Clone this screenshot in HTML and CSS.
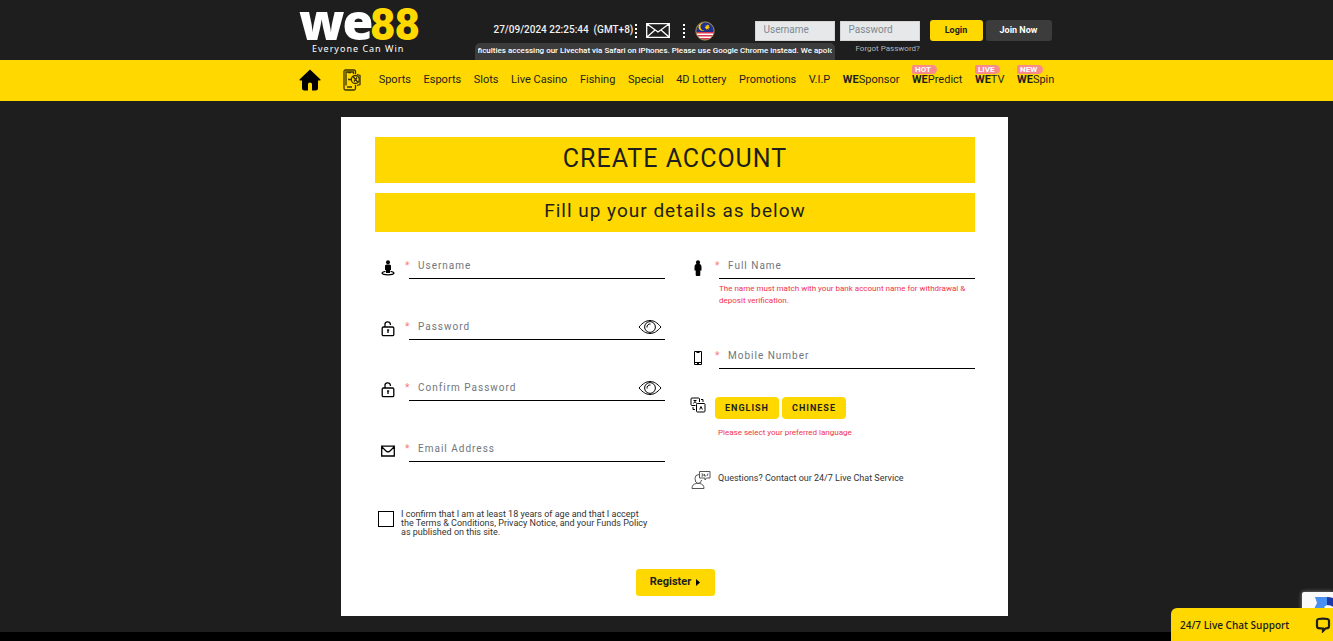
FILE: index.html
```html
<!DOCTYPE html>
<html lang="en">
<head>
<meta charset="utf-8">
<meta name="viewport" content="width=device-width, initial-scale=1">
<title>WE88 - Create Account</title>
<link rel="stylesheet" href="styles.css">
</head>
<body>
<svg class="defs" aria-hidden="true">
  <symbol id="lock" viewBox="0 0 14 16"><rect x="1.2" y="6" width="11.6" height="8.6" rx="1.2"/><path d="M4 6V3.8a2.7 2.7 0 0 1 5.4-.6V4M7 9v3" /><path d="M6 9h2.200"/></symbol>
  <symbol id="eye" viewBox="0 0 24 16"><path d="M1 8C5 3.500 8 1.500 12 1.500S19 3.500 23 8c-4 4.500-7 6.500-11 6.500S5 12.500 1 8z"/><circle cx="12" cy="8" r="5.400"/><path d="M9 8.500a3 3 0 0 1 3.500-3.500"/></symbol>
</svg>

<header class="header">
  <div class="wrap header-row">
    <a class="logo" href="#" aria-label="WE88 Everyone Can Win">
      <svg width="122" height="50" viewBox="0 0 122 50">
        <text class="logo-we" x="0" y="34">we</text>
        <text class="logo-num" x="71" y="34">88</text>
        <text class="logo-tag" x="13" y="46">Everyone Can Win</text>
      </svg>
    </a>
    <div class="tools">
      <div class="tools-top">
        <time class="clock">27/09/2024 22:25:44 &nbsp;(GMT+8)</time>
        <span class="dots"></span>
        <a class="mail" href="#" aria-label="Messages"><svg width="24" height="15" viewBox="0 0 24 15"><path d="M.7.7h22.600v13.600H.7zM.7.7 12 9 23.300.7M.7 14.300 9 7m14.300 7.300L15 7"/></svg></a>
        <span class="dots"></span>
        <button class="flag" type="button" aria-label="Malaysia">
          <svg width="20" height="20" viewBox="0 0 20 20"><defs><clipPath id="round"><circle cx="10" cy="10" r="9"/></clipPath></defs><g clip-path="url(#round)"><path fill="#fff" d="M0 0h20v20H0z"/><path fill="#e0364c" d="M0 11h20v1.500H0zM0 14h20v1.500H0zM0 17h20v3H0z"/><path fill="#20308c" d="M0 0h20v11H0z"/><path fill="#fc0" d="M8.500 2.200a3.900 3.900 0 1 0 1 7 3.200 3.200 0 1 1-1-7z"/><path fill="#fc0" d="m12 3 .7 1.400 1.800-.6-.8 1.700 1.300.8-1.600.6.4 1.600-1.600-.8-1.100 1.100-.2-1.600-1.400-.4 1.400-1-.5-1.500 1.500.4z"/></g><circle cx="10" cy="10" r="9.200" fill="none" stroke="#9a8747"/></svg>
        </button>
        <form class="login">
          <input class="login-input" type="text" placeholder="Username" aria-label="Username">
          <input class="login-input" type="password" placeholder="Password" aria-label="Password">
          <button class="btn btn-login" type="button">Login</button>
          <button class="btn btn-join" type="button">Join Now</button>
        </form>
      </div>
      <div class="tools-bottom">
        <div class="ticker"><span class="ticker-text">ficulties accessing our Livechat via Safari on iPhones. Please use Google Chrome instead. We apolog</span></div>
        <a class="forgot" href="#">Forgot Password?</a>
      </div>
    </div>
  </div>
</header>

<nav class="nav">
  <div class="wrap nav-row">
    <a class="nav-home" href="#" aria-label="Home"><svg width="22" height="22" viewBox="0 0 22 22"><path d="M11 .5 21.500 10.500q.5 1-.7 1H19V19q0 2.500-2.500 2.500H13V15q0-1.500-2-1.500T9 15v6.500H5.500Q3 21.500 3 19v-7.500H1.200q-1.200 0-.7-1z"/></svg></a>
    <a class="nav-app" href="#" aria-label="Mobile app"><svg width="18" height="22" viewBox="0 0 18 22"><path d="M12.500 5V2.500Q12.500 1 11 1H2.500Q1 1 1 2.500v17Q1 21 2.500 21H11q1.500 0 1.500-1.500V16M3 16.500V3h7.500v2M4 18h5M5 3.500h3"/><circle cx="12.300" cy="10.500" r="4"/><path d="M8.300 10.500H5m5-3 5 6m-4-1 3-4m0-3 3 1v9l-3 1"/></svg></a>
    <a href="#">Sports</a><a href="#">Esports</a><a href="#">Slots</a><a href="#">Live Casino</a><a href="#">Fishing</a><a href="#">Special</a><a href="#">4D Lottery</a><a href="#">Promotions</a><a href="#">V.I.P</a><a href="#"><b>WE</b>Sponsor</a>
    <a class="tagged" href="#"><span class="badge">HOT</span><b>WE</b>Predict</a>
    <a class="tagged" href="#"><span class="badge">LIVE</span><b>WE</b>TV</a>
    <a class="tagged" href="#"><span class="badge">NEW</span><b>WE</b>Spin</a>
  </div>
</nav>

<main class="main">
  <form class="card">
    <h1 class="title">CREATE ACCOUNT</h1>
    <h2 class="subtitle">Fill up your details as below</h2>
    <div class="columns">
      <div class="column">
        <div class="field">
          <label class="field-label" for="user"><svg class="icon" width="14" height="16" viewBox="0 0 14 16"><circle cx="7" cy="2.300" r="2" fill="#000" stroke="none"/><path fill="#000" stroke="none" d="M5.500 4.500h3q1.500 0 1.500 1.500v4H9v3H5v-3H4V6q0-1.500 1.500-1.500z"/><path d="M4.500 11.300c-5 .8-5 3.500 2.500 3.500s7.500-2.700 2.500-3.500"/></svg><span class="star">*</span></label>
          <input id="user" class="field-input" type="text" placeholder="Username" aria-label="Username">
        </div>
        <div class="field">
          <label class="field-label" for="pass"><svg class="icon" width="14" height="16"><use href="#lock"/></svg><span class="star">*</span></label>
          <div class="field-input with-eye"><input id="pass" type="password" placeholder="Password" aria-label="Password"><button class="eye" type="button" aria-label="Show password"><svg width="24" height="16"><use href="#eye"/></svg></button></div>
        </div>
        <div class="field">
          <label class="field-label" for="confirm"><svg class="icon" width="14" height="16"><use href="#lock"/></svg><span class="star">*</span></label>
          <div class="field-input with-eye"><input id="confirm" type="password" placeholder="Confirm Password" aria-label="Confirm Password"><button class="eye" type="button" aria-label="Show password"><svg width="24" height="16"><use href="#eye"/></svg></button></div>
        </div>
        <div class="field">
          <label class="field-label" for="email"><svg class="icon" width="14" height="16" viewBox="0 0 14 16"><path d="M.7 3.200h12.600v9.800H.7zM1 4l4.500 4.400q1.500 1 3 0L13 4"/></svg><span class="star">*</span></label>
          <input id="email" class="field-input" type="email" placeholder="Email Address" aria-label="Email Address">
        </div>
        <div class="consent">
          <input id="agree" class="check" type="checkbox">
          <label for="agree">I confirm that I am at least 18 years of age and that I accept<br>the Terms &amp; Conditions, Privacy Notice, and your Funds Policy<br>as published on this site.</label>
        </div>
      </div>
      <div class="column">
        <div class="field field-name">
          <label class="field-label" for="name"><svg class="icon" width="14" height="16" viewBox="0 0 14 16"><circle cx="7" cy="2.400" r="2.100" fill="#000" stroke="none"/><path fill="#000" stroke="none" d="M5.500 4h3q2 .3 2 2.500v4H9.300V15q0 1-1 1H5.700q-1 0-1-1v-4.500H3.500v-4q0-2.200 2-2.500z"/></svg><span class="star">*</span></label>
          <input id="name" class="field-input" type="text" placeholder="Full Name" aria-label="Full Name">
          <p class="hint">The name must match with your bank account name for withdrawal &amp; deposit verification.</p>
        </div>
        <div class="field field-mobile">
          <label class="field-label" for="mobile"><svg class="icon thin" width="14" height="16" viewBox="0 0 14 16"><path d="M3.500 1.500h7v13h-7zM3.500 12.500h7M5.500 2.500h3M6 13.500h2"/></svg><span class="star">*</span></label>
          <input id="mobile" class="field-input" type="tel" placeholder="Mobile Number" aria-label="Mobile Number">
        </div>
        <div class="language">
          <svg class="icon" width="16" height="16" viewBox="0 0 16 16"><path d="M9.500 5V2q0-1-1-1H2Q1 1 1 2v5.500q0 1 1 1h3.500M6.500 7.500q0-1 1-1H14q1 0 1 1V14q0 1-1 1H7.500q-1 0-1-1zM3.500 3.500h3M5 3v1.500L3.500 6.500m1.500-2 1.500 2M9.700 12.500l1.300-3 1.300 3M11 2.500h2V5m-10 5v2.500h2"/></svg>
          <button class="btn btn-lang" type="button">ENGLISH</button>
          <button class="btn btn-lang" type="button">CHINESE</button>
        </div>
        <p class="hint hint-lang">Please select your preferred language</p>
        <div class="help">
          <svg class="help-icon" width="20" height="20" viewBox="0 0 20 20"><path d="M1 18.500q0-4.500 4.500-5h3q4.500.5 4.500 5zM8 4.500Q4 4.500 4 8.500q0 4.500 3 5 3.500-.5 3.500-3.500M8.500 1.500h10.500v6.500h-3.500l-1.500 2V8H8.500z"/><path d="M10.500 4h1.500v2h-1.500M13.500 4v2H15M16 6l1-2.500"/></svg>
          <a href="#">Questions? Contact our 24/7 Live Chat Service</a>
        </div>
      </div>
    </div>
    <button class="btn btn-register" type="button">Register<svg width="4" height="8" viewBox="0 0 4 8"><path d="M0 1 4 4.500 0 8z"/></svg></button>
  </form>
</main>
<footer class="footer"></footer>

<div class="captcha"><svg width="31" height="31" viewBox="0 0 31 31"><path fill="#4a90f0" d="M3 1h12v8l-3 2 5 5h-5q-3 2-4 6-6-3-6-9l3-6z"/><path fill="#1c3aa9" d="M15 1q8 0 12 6l3-3v12H18l4-4q-2-3-7-3z"/></svg></div>
<button class="chat" type="button">24/7 Live Chat Support<svg width="16" height="16" viewBox="0 0 16 16"><path d="M3.500 2q4.500-.8 9 0 1.500.4 1.500 2v5q0 2-1.500 2.200l-2 .3L8 14v-2.500q-3 0-4.500-.3Q2 11 2 9V4q0-1.600 1.500-2z"/></svg></button>
</body>
</html>
```
FILE: styles.css
```css
* { box-sizing: border-box; }
body {
  margin: 0;
  min-height: 100vh;
  display: flex;
  flex-direction: column;
  background: #1e1e1e;
  color: #1e1e1e;
  font-family: Roboto, "Noto Sans", sans-serif;
  font-size: 11px;
}
h1, h2, p { margin: 0; font-weight: 400; }
a { color: inherit; text-decoration: none; }
button, input { font: inherit; color: inherit; }
button { padding: 0; border: 0; background: none; cursor: pointer; }
svg { display: block; flex: none; }
.defs { position: absolute; width: 0; height: 0; }
.wrap { width: 100%; max-width: 756px; margin: 0 auto; }
.header, .nav { padding-left: 20px; }

.header-row { display: flex; }
.logo { width: 176px; padding-top: 6px; }
.logo svg { overflow: visible; }
.logo-we { font: 800 50px "Open Sans", sans-serif; fill: #fff; letter-spacing: -2px; }
.logo-num { font: 900 44px Roboto, sans-serif; fill: #ffd800; letter-spacing: -1px; }
.logo-tag { font: 9px "Noto Sans", sans-serif; fill: #fff; letter-spacing: 1px; }
.tools { flex: 1; padding-top: 18px; }
.tools-top {
  display: grid;
  grid-template-columns: 141px 11px 37px 12px 60px 1fr;
  align-items: center;
  height: 25px;
  padding-left: 19px;
}
.clock { padding-bottom: 2px; color: #f0f0f0; font-size: 10px; font-weight: 500; white-space: nowrap; }
.dots { height: 14px; border-left: 2px dotted #fff; }
.mail svg { fill: none; stroke: #fff; stroke-width: 1.300; }
.login { display: flex; align-items: center; gap: 5px; }
.login-input {
  width: 80px;
  height: 20px;
  padding: 0 8px 2px;
  border: 1px solid #d5d5d5;
  border-radius: 0;
  background: #e6e8ea;
  font-size: 10px;
}
.login-input::placeholder { color: #808890; }
.btn { border-radius: 3px; background: #ffd800; font-weight: 700; }
.btn-login, .btn-join { height: 21px; padding-bottom: 2px; font-size: 9px; }
.btn-login { width: 53px; margin-left: 5px; }
.btn-join { width: 66px; margin-left: -2px; background: #3c3c3c; color: #fff; }
.tools-bottom { display: flex; }
.ticker {
  width: 360px;
  height: 17px;
  padding: 0 3px;
  border-radius: 5px 5px 0 0;
  background: #3c3c3c;
}
.ticker-text { display: block; overflow: hidden; color: #fff; font-size: 8px; font-weight: 500; line-height: 15px; white-space: nowrap; }
.forgot { margin-left: 21px; color: #b5b5b5; font-size: 8px; line-height: 12px; }

.nav { background: #ffd800; }
.nav-row { display: flex; align-items: center; justify-content: space-between; height: 41px; padding-bottom: 2px; white-space: nowrap; }
.nav-home { width: 32px; }
.nav-app { width: 23px; }
.nav-app svg { fill: none; stroke: #3b3300; stroke-width: 1.300; }
.tagged { position: relative; }
.badge {
  position: absolute;
  bottom: 12px;
  left: 0;
  padding: 0 6px 0 3px;
  border-radius: 2px 5px 5px 2px;
  background: #f98b8b;
  color: #fff;
  font-size: 8px;
  font-weight: 700;
  line-height: 9px;
}

.main { padding: 16px 0 16px 16px; }
.card { max-width: 667px; margin: 0 auto; padding: 20px 33px 20px 34px; background: #fff; }
.title, .subtitle { background: #ffd800; text-align: center; letter-spacing: 1px; }
.title { height: 46px; font-size: 25px; line-height: 43px; }
.subtitle { height: 39px; margin-top: 10px; font-size: 19px; line-height: 35px; }
.columns { display: grid; grid-template-columns: 1fr 1fr; gap: 20px; padding-top: 21px; }
.field { display: grid; grid-template-columns: 34px 1fr; height: 61px; }
.field-label { display: flex; align-items: flex-start; gap: 10px; padding: 7px 0 0 6px; }
.icon, .eye svg, .help-icon { fill: none; stroke: #000; stroke-width: 1.300; }
.thin { stroke-width: 1; }
.star { color: #f77; font-size: 10px; line-height: 12px; }
.field-input {
  width: 100%;
  height: 26px;
  padding: 0 9px;
  border: 0;
  border-bottom: 1px solid #000;
  border-radius: 0;
  background: none;
  font-size: 10px;
  letter-spacing: 1px;
}
.with-eye { display: flex; padding-right: 3px; }
.with-eye input { flex: 1; min-width: 0; padding: 0; border: 0; background: none; letter-spacing: 1px; }
.field-input::placeholder, .with-eye input::placeholder { color: #70767c; }
.eye svg { stroke-width: 1; }
.consent { display: flex; gap: 7px; padding-left: 3px; color: #333; font-size: 9px; line-height: 9px; white-space: nowrap; }
.consent label { padding-top: 13px; }
.check { appearance: none; width: 16px; height: 16px; margin: 14px 0 0; border: 1px solid #000; }
.field-name { height: 90px; grid-template-rows: 26px 1fr; }
.field-name .hint { grid-column: 2; padding-top: 4px; }
.hint { color: #f0324b; font-size: 8px; line-height: 12px; }
.field-mobile { height: 54px; }
.language { display: flex; gap: 3px; padding-left: 5px; }
.language .icon { margin-right: 6px; stroke-width: 1; }
.btn-lang { width: 64px; height: 22px; border-radius: 4px; font-size: 9px; letter-spacing: 1px; line-height: 18px; }
.hint-lang { padding: 8px 0 0 33px; }
.help { display: flex; gap: 7px; padding: 31px 0 0 6px; font-size: 9px; line-height: 16px; color: #333; }
.help-icon { stroke: #555; stroke-width: 1; }
.btn-register { display: flex; align-items: center; justify-content: center; gap: 5px; width: 79px; height: 27px; margin: 32px auto 0; padding-bottom: 2px; }

.footer { flex: 1; background: #000; }
.captcha { position: fixed; right: 0; bottom: 0; width: 31px; height: 49px; padding: 4px 0 0 10px; overflow: hidden; border-radius: 2px 0 0 2px; background: #fafafa; box-shadow: 0 0 4px #888; }
.chat {
  position: fixed;
  right: 0;
  bottom: 0;
  display: flex;
  align-items: center;
  justify-content: space-between;
  width: 162px;
  height: 33px;
  padding: 0 2px 0 9px;
  border-radius: 6px 0 0 0;
  background: #ffd800;
  font: 600 10px "Open Sans", sans-serif;
}
.chat svg { fill: none; stroke: #1e1e1e; stroke-width: 2.200; }
```
